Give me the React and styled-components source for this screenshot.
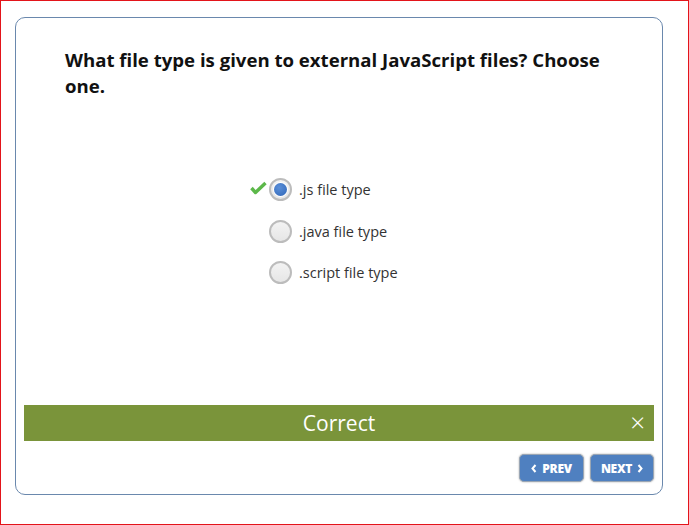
import React from 'react'
import styled, { createGlobalStyle } from 'styled-components'

const GlobalStyle = createGlobalStyle`
  html, body {
    margin: 0;
    padding: 0;
    background: #fff;
  }
  * { box-sizing: border-box; }
`

const Frame = styled.div`
  width: 689px;
  height: 525px;
  border: 1px solid #e3141a;
  padding: 16px 0 0 14px;
  font-family: "Open Sans", "Liberation Sans", sans-serif;
`

const Card = styled.div`
  width: 648px;
  height: 478px;
  border: 1px solid #6a88ad;
  border-radius: 10px;
  display: flex;
  flex-direction: column;
  padding: 0 8px 12px 8px;
`

const Question = styled.h1`
  margin: 0;
  padding: 29px 40px 0 41px;
  font-size: 18.6px;
  line-height: 26px;
  font-weight: 700;
  color: #111;
`

const Options = styled.div`
  display: flex;
  flex-direction: column;
  gap: 18.5px;
  margin: 79px 0 0 245px;
`

const Option = styled.label`
  display: flex;
  align-items: center;
  gap: 7px;
  height: 23px;
  position: relative;
  font-size: 14.5px;
  color: #333;
  cursor: pointer;
`

const Check = styled.svg`
  position: absolute;
  left: -19px;
  top: 3px;
`

const Radio = styled.span`
  width: 23px;
  height: 23px;
  border-radius: 50%;
  border: 2px solid #bcbcbc;
  background: linear-gradient(#f3f3f3, #e6e6e6);
  display: flex;
  align-items: center;
  justify-content: center;

  &::after {
    content: '';
    display: ${p => (p.$checked ? 'block' : 'none')};
    width: 13px;
    height: 13px;
    border-radius: 50%;
    background: radial-gradient(circle at 40% 35%, #5b8fd8, #2f66b8);
    box-shadow: 0 0 0 1px #fff;
  }
`

const Feedback = styled.div`
  margin-top: auto;
  height: 36px;
  background: #7a943a;
  color: #fff;
  display: flex;
  align-items: center;
  justify-content: center;
  position: relative;
  font-size: 21px;
  font-weight: 400;
`

const Close = styled.span`
  position: absolute;
  right: 9px;
  top: 5px;
  font-size: 26px;
  line-height: 24px;
  font-weight: 300;
`

const Nav = styled.div`
  display: flex;
  justify-content: flex-end;
  gap: 6px;
  margin-top: 13px;
`

const NavButton = styled.button`
  height: 28px;
  width: ${p => p.$w}px;
  border: 1px solid #9aa6b4;
  border-radius: 5px;
  background: #4f80c0;
  box-shadow: 0 0 2px rgba(0, 0, 0, 0.35);
  color: #fff;
  font-family: "Open Sans", "Liberation Sans", sans-serif;
  font-weight: 800;
  font-size: 12px;
  letter-spacing: -0.3px;
  display: flex;
  align-items: center;
  justify-content: center;
  gap: 5px;
  padding: 0;
`

const Chevron = ({ dir }) => (
  <svg width="6" height="9" viewBox="0 0 6 9">
    <path
      d={dir === 'left' ? 'M4.5 1 L1.5 4.5 L4.5 8' : 'M1.5 1 L4.5 4.5 L1.5 8'}
      fill="none"
      stroke="#fff"
      strokeWidth="2"
    />
  </svg>
)

const options = [
  { label: '.js file type', checked: true },
  { label: '.java file type' },
  { label: '.script file type' },
]

export default function App() {
  return (
    <>
      <GlobalStyle />
      <Frame>
        <Card>
          <Question>What file type is given to external JavaScript files? Choose one.</Question>
          <Options>
            {options.map(o => (
              <Option key={o.label}>
                {o.checked && (
                  <Check width="17" height="14" viewBox="0 0 17 14">
                    <path d="M1.5 7 L5.5 11.5 L15.5 2" fill="none" stroke="#5cb84a" strokeWidth="3.4" strokeLinejoin="round" />
                  </Check>
                )}
                <Radio $checked={o.checked} />
                {o.label}
              </Option>
            ))}
          </Options>
          <Feedback>
            Correct
            <Close>×</Close>
          </Feedback>
          <Nav>
            <NavButton $w={65}><Chevron dir="left" />PREV</NavButton>
            <NavButton $w={64}>NEXT<Chevron dir="right" /></NavButton>
          </Nav>
        </Card>
      </Frame>
    </>
  )
}
